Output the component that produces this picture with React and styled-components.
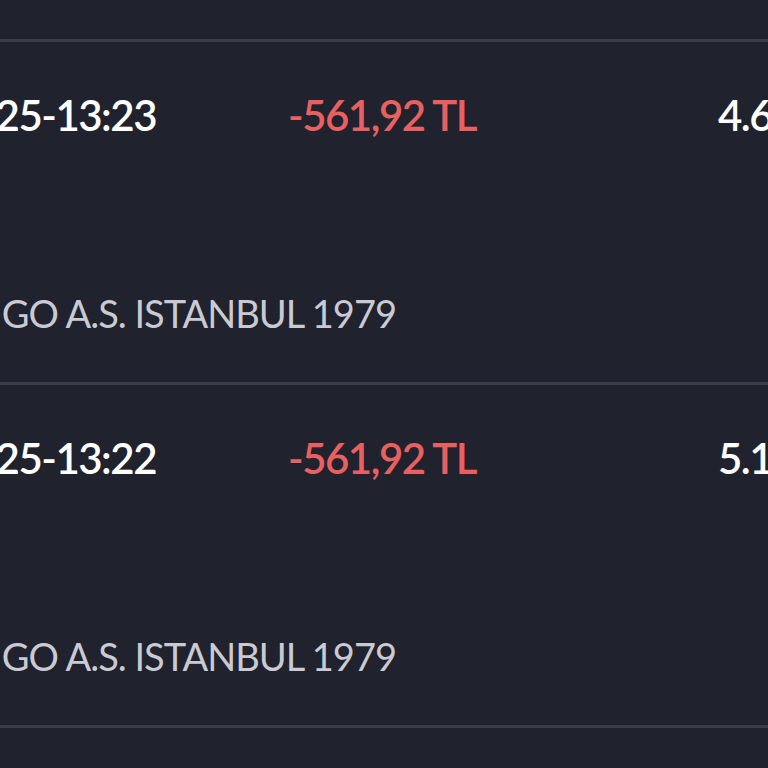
import styled, { createGlobalStyle } from "styled-components";

const Global = createGlobalStyle`
  html, body {
    margin: 0;
    padding: 0;
    background: #20222d;
    overflow: hidden;
  }
  body {
    font-family: "Lato", "Noto Sans", sans-serif;
    -webkit-font-smoothing: antialiased;
  }
`;

const Screen = styled.div`
  width: 768px;
  height: 768px;
  overflow: hidden;
  background: #20222d;
  padding-top: 39px;
  box-sizing: border-box;
`;

const Row = styled.div`
  height: 343px;
  border-top: 3px solid #383b4a;
  box-sizing: border-box;
  display: flex;
  flex-direction: column;
  justify-content: space-between;
  padding: 48px 0 46px 0;
`;

const TopLine = styled.div`
  display: flex;
  align-items: baseline;
  white-space: nowrap;
`;

const DateCell = styled.div`
  width: 156px;
  flex: none;
  display: flex;
  justify-content: flex-end;
  color: #ffffff;
  font-size: 42px;
  font-weight: 600;
  letter-spacing: -1.5px;
`;

const Amount = styled.div`
  width: 430px;
  flex: none;
  margin-left: 132px;
  color: ${({ $negative }) => ($negative ? "#e8605f" : "#5fd38a")};
  font-size: 42px;
  font-weight: 600;
  letter-spacing: -1.5px;
`;

const Balance = styled.div`
  color: #ffffff;
  font-size: 42px;
  font-weight: 600;
  letter-spacing: -1.5px;
`;

const Merchant = styled.div`
  width: 396px;
  display: flex;
  justify-content: flex-end;
  white-space: nowrap;
  color: #c9cad2;
  font-size: 38px;
  font-weight: 400;
  letter-spacing: -1px;
`;

const transactions = [
  {
    date: "14.03.2025-13:23",
    amount: "-561,92 TL",
    balance: "4.622,18 TL",
    merchant: "TRENDYOL GO A.S. ISTANBUL 1979",
  },
  {
    date: "14.03.2025-13:22",
    amount: "-561,92 TL",
    balance: "5.184,10 TL",
    merchant: "TRENDYOL GO A.S. ISTANBUL 1979",
  },
];

export default function App() {
  return (
    <>
      <Global />
      <Screen>
        {transactions.map((t) => (
          <Row key={t.date}>
            <TopLine>
              <DateCell>{t.date}</DateCell>
              <Amount $negative={t.amount.startsWith("-")}>{t.amount}</Amount>
              <Balance>{t.balance}</Balance>
            </TopLine>
            <Merchant>{t.merchant}</Merchant>
          </Row>
        ))}
        <Row />
      </Screen>
    </>
  );
}
